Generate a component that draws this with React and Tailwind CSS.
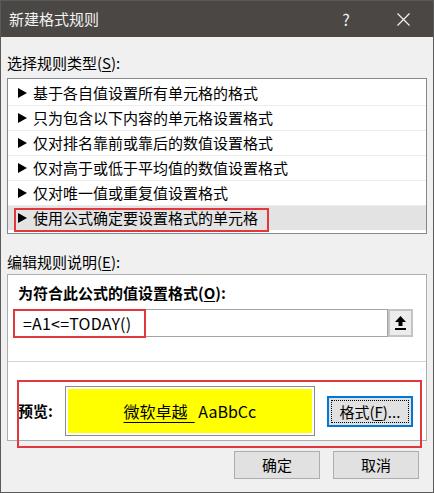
import React from "react";

const rules = [
  "基于各自值设置所有单元格的格式",
  "只为包含以下内容的单元格设置格式",
  "仅对排名靠前或靠后的数值设置格式",
  "仅对高于或低于平均值的数值设置格式",
  "仅对唯一值或重复值设置格式",
  "使用公式确定要设置格式的单元格",
];

function Tri() {
  return (
    <svg width="9" height="10" viewBox="0 0 9 10" className="shrink-0">
      <polygon points="0,0 9,5 0,10" fill="#000" />
    </svg>
  );
}

export default function App() {
  return (
    <div className="w-[434px] h-[493px] border border-[#5a5a5a] bg-[#f0f0f0] flex flex-col text-black font-['Noto_Sans_CJK_SC','Noto_Sans',sans-serif] overflow-hidden">
      {/* Title bar */}
      <div className="h-[36px] bg-[#4a4744] flex items-center pl-[8px] text-[15px] text-[#f2f2f2] relative">
        <span className="leading-[20px]">新建格式规则</span>
        <span className="ml-auto w-[12px] text-center leading-[20px] text-[16px] mr-[45px]">?</span>
        <svg width="13" height="13" viewBox="0 0 13 13" className="mr-[23px]">
          <path d="M0.5 0.5 L12.5 12.5 M12.5 0.5 L0.5 12.5" stroke="#f2f2f2" strokeWidth="1.2" />
        </svg>
      </div>

      <div className="px-[6px] flex flex-col text-[15px]">
        <div className="pt-[16px] pb-[5px] leading-[20px]">
          选择规则类型(<span className="underline underline-offset-2">S</span>):
        </div>

        <div className="border border-[#828790] bg-white pt-[1px] pb-[3px]">
          {rules.map((r, i) => (
            <div
              key={i}
              className={
                "h-[25px] flex items-center pl-[10px] relative " +
                (i > 0 ? "border-t border-[#ececec] " : "") +
                (i === 5 ? "bg-[#e3e3e3]" : "")
              }
            >
              <Tri />
              <span className="ml-[6px] leading-[20px]">{r}</span>
              {i === 5 && (
                <div className="absolute left-[6px] top-[2px] w-[255px] h-[24px] border-2 border-[#e2383d]" />
              )}
            </div>
          ))}
        </div>

        <div className="pt-[18px] pb-[2px] leading-[20px]">
          编辑规则说明(<span className="underline underline-offset-2">E</span>):
        </div>

        <div className="h-[167px] border border-[#adadad] bg-white flex flex-col relative">
          <div className="h-[87px] border-b border-[#d4d4d4] pt-[8px] pl-[10px]">
            <div className="font-bold leading-[20px]">
              为符合此公式的值设置格式(<span className="underline underline-offset-2">O</span>):
            </div>
            <div className="mt-[6px] -ml-[5px] w-[400px] h-[28px] flex relative">
              <div className="flex-1 border border-[#a3a3a3] bg-white flex items-center pl-[9px] text-[16px] tracking-[0.2px]">
                =A1&lt;=TODAY()
              </div>
              <div className="w-[25px] h-[28px] bg-[#ececec] border-2 border-[#c4c4c4] flex items-center justify-center">
                <svg width="11" height="14" viewBox="0 0 11 14">
                  <polygon points="5.5,0 11,6 7.5,6 7.5,10 3.5,10 3.5,6 0,6" fill="#000" />
                  <rect x="0" y="12" width="11" height="2" fill="#000" />
                </svg>
              </div>
              <div className="absolute left-0 top-0 w-[133px] h-[29px] border-2 border-[#e2383d]" />
            </div>
          </div>

          <div className="flex-1 relative pl-[10px] pt-[24px] flex items-start">
            <div className="h-[50px] flex items-center font-bold leading-[20px]">预览:</div>
            <div className="ml-[12px] w-[250px] h-[50px] border border-[#8a8a8a] bg-white p-[2px]">
              <div className="w-full h-full bg-[#ffff00] flex items-center justify-center text-[16px] leading-[20px]">
                <span className="underline underline-offset-[4px]">微软卓越&nbsp;&nbsp;</span>
                <span>&nbsp;AaBbCc</span>
              </div>
            </div>
            <div className="ml-[12px] mt-[10px] w-[86px] h-[31px] border-2 border-[#0078d7] bg-[#e1e1e1] p-[2px]">
              <div className="w-full h-full border border-dotted border-[#000] flex items-center justify-center leading-[20px]">
                格式(<span className="underline underline-offset-2">F</span>)...
              </div>
            </div>
            <div className="absolute left-[9px] top-[18px] w-[405px] h-[68px] border-2 border-[#e2383d]" />
          </div>
        </div>

        <div className="mt-[10px] flex justify-end gap-[13px] pr-[8px]">
          <div className="w-[86px] h-[28px] bg-[#e1e1e1] border border-[#adadad] flex items-center justify-center leading-[20px]">确定</div>
          <div className="w-[86px] h-[28px] bg-[#e1e1e1] border border-[#adadad] flex items-center justify-center leading-[20px]">取消</div>
        </div>
      </div>
    </div>
  );
}
